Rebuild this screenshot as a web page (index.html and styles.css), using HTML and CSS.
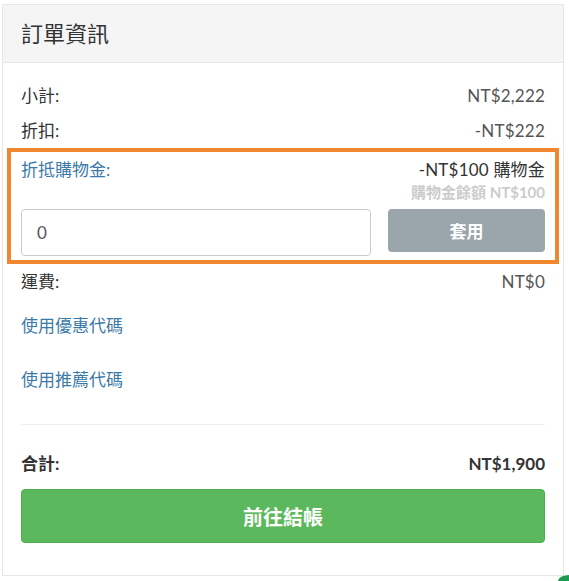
FILE: index.html
```html
<!DOCTYPE html>
<html lang="zh-Hant">
<head>
  <meta charset="UTF-8">
  <meta name="viewport" content="width=device-width, initial-scale=1.0">
  <title>訂單資訊</title>
  <link rel="stylesheet" href="styles.css">
</head>
<body>
  <div class="card">
    <div class="card-header">訂單資訊</div>
    <div class="card-body">
      <div class="row">
        <span>小計:</span>
        <span class="amount">NT$2,222</span>
      </div>
      <div class="row">
        <span>折扣:</span>
        <span class="amount">-NT$222</span>
      </div>

      <div class="credit-box">
        <div class="row">
          <span class="link">折抵購物金:</span>
          <span class="amount">-NT$100 購物金</span>
        </div>
        <div class="balance">購物金餘額 NT$100</div>
        <div class="credit-form">
          <input type="text" class="credit-input" value="0">
          <button class="apply-btn">套用</button>
        </div>
      </div>

      <div class="row">
        <span>運費:</span>
        <span class="amount">NT$0</span>
      </div>
      <a class="code-link first">使用優惠代碼</a>
      <a class="code-link">使用推薦代碼</a>

      <div class="total-row">
        <span>合計:</span>
        <span>NT$1,900</span>
      </div>
      <button class="checkout-btn">前往結帳</button>
    </div>
  </div>
  <div class="float-btn"></div>
</body>
</html>
```

FILE: styles.css
```css
body {
  margin: 0;
  font-family: "Lato", "Noto Sans CJK TC", sans-serif;
  color: #333;
  background: #fff;
  overflow: hidden;
}
.card {
  margin: 4px 0 0 2px;
  width: 560px;
  border: 1px solid #e6e6e6;
  background: #fff;
}
.card-header {
  height: 57px;
  line-height: 57px;
  padding: 0 18px;
  font-size: 22px;
  background: #f5f5f5;
  border-bottom: 1px solid #e6e6e6;
}
.card-body {
  padding: 22px 18px 32px;
}
.row {
  display: flex;
  justify-content: space-between;
  font-size: 17px;
  line-height: 21px;
  margin-bottom: 14px;
}
.amount {
  color: #555;
  letter-spacing: 0.2px;
}
.link {
  color: #3b7aa8;
}
.credit-box {
  margin: -7px -14px 7px;
  padding: 7px 10px 4px;
  border: 4px solid #f0862e;
}
.credit-box .row {
  margin-bottom: 0;
}
.credit-box .amount {
  color: #333;
}
.balance {
  text-align: right;
  font-size: 15px;
  font-weight: bold;
  color: #ccc;
  line-height: 21px;
  margin-top: 2px;
}
.credit-form {
  display: flex;
  gap: 17px;
  margin-top: 6px;
  align-items: flex-start;
}
.credit-input {
  flex: 1;
  height: 47px;
  box-sizing: border-box;
  border: 1px solid #ccc;
  border-radius: 4px;
  padding: 0 15px;
  font-size: 17px;
  font-family: inherit;
  color: #555;
}
.apply-btn {
  width: 157px;
  height: 43px;
  border: none;
  border-radius: 4px;
  background: #9ba6ac;
  color: #fff;
  font-size: 17px;
  font-weight: bold;
  font-family: inherit;
}
.code-link {
  display: block;
  color: #3b7aa8;
  font-size: 17px;
  line-height: 21px;
  margin-top: 33px;
}
.code-link.first {
  margin-top: 23px;
}
.total-row {
  display: flex;
  justify-content: space-between;
  font-size: 17px;
  font-weight: bold;
  line-height: 21px;
  margin-top: 34px;
  padding-top: 28px;
  border-top: 1px solid #eee;
}
.checkout-btn {
  display: block;
  width: 100%;
  height: 54px;
  margin-top: 15px;
  border: 1px solid #4cae4c;
  border-radius: 4px;
  background: #5cb85c;
  color: #fff;
  font-size: 20px;
  font-weight: bold;
  font-family: inherit;
}
/* edge of a floating button, cut off by the frame */
.float-btn {
  position: absolute;
  left: 558px;
  top: 575px;
  width: 11px;
  height: 6px;
  border-top-left-radius: 11px 6px;
  background: #1d9a4f;
}
```
